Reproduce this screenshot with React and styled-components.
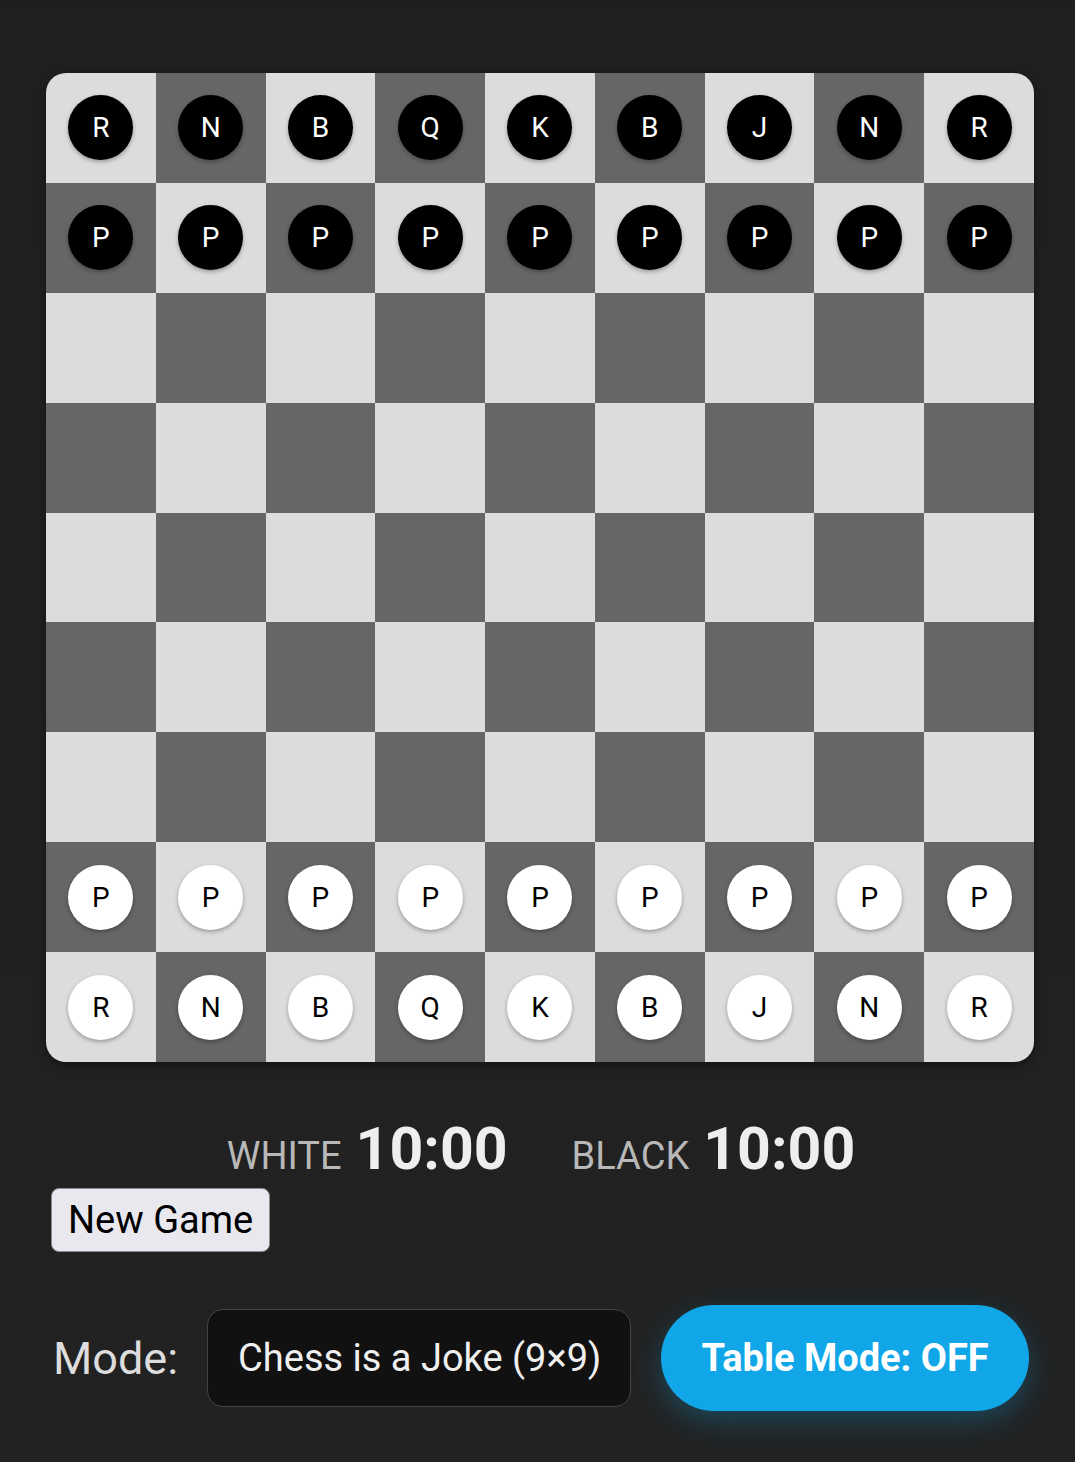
import React from 'react';
import styled, { createGlobalStyle } from 'styled-components';

const GlobalStyle = createGlobalStyle`
  html, body {
    margin: 0;
    padding: 0;
    background: #1f1f1f;
    font-family: Roboto, "Liberation Sans", Arial, sans-serif;
  }
`;

const BACK_ROW = ['R', 'N', 'B', 'Q', 'K', 'B', 'J', 'N', 'R'];
const SIZE = 9;

function startPosition() {
  const rows = [];
  for (let r = 0; r < SIZE; r++) {
    const row = [];
    for (let c = 0; c < SIZE; c++) {
      if (r === 0) row.push({ side: 'black', type: BACK_ROW[c] });
      else if (r === 1) row.push({ side: 'black', type: 'P' });
      else if (r === SIZE - 2) row.push({ side: 'white', type: 'P' });
      else if (r === SIZE - 1) row.push({ side: 'white', type: BACK_ROW[c] });
      else row.push(null);
    }
    rows.push(row);
  }
  return rows;
}

function App() {
  const board = startPosition();

  return (
    <>
      <GlobalStyle />
      <Page>
        <Board>
          {board.map((row, r) =>
            row.map((piece, c) => (
              <Square key={`${r}-${c}`} $dark={(r + c) % 2 === 1}>
                {piece && <Piece $side={piece.side}>{piece.type}</Piece>}
              </Square>
            ))
          )}
        </Board>

        <Clocks>
          <Clock>
            <ClockLabel>White</ClockLabel>
            <ClockTime>10:00</ClockTime>
          </Clock>
          <Clock>
            <ClockLabel>Black</ClockLabel>
            <ClockTime>10:00</ClockTime>
          </Clock>
        </Clocks>

        <NewGameButton>New Game</NewGameButton>

        <ModeRow>
          <ModeLabel>Mode:</ModeLabel>
          <ModeSelect>Chess is a Joke (9×9)</ModeSelect>
          <TableToggle>Table Mode: OFF</TableToggle>
        </ModeRow>
      </Page>
    </>
  );
}

const Page = styled.div`
  min-height: 1462px;
  box-sizing: border-box;
  padding: 73px 41px 0 46px;
  background: linear-gradient(#1f1f1f, #222222);
`;

const Board = styled.div`
  width: 988px;
  height: 989px;
  display: grid;
  grid-template-columns: repeat(9, 1fr);
  grid-template-rows: repeat(9, 1fr);
  border-radius: 20px;
  overflow: hidden;
  box-shadow: 0 3px 8px rgba(0, 0, 0, 0.45);
`;

const Square = styled.div`
  display: flex;
  align-items: center;
  justify-content: center;
  background: ${(p) => (p.$dark ? '#666666' : '#dcdcdc')};
`;

const Piece = styled.div`
  width: 65px;
  height: 65px;
  border-radius: 50%;
  display: flex;
  align-items: center;
  justify-content: center;
  font-size: 28px;
  font-weight: 400;
  background: ${(p) => (p.$side === 'black' ? '#000000' : '#ffffff')};
  color: ${(p) => (p.$side === 'black' ? '#ffffff' : '#000000')};
  box-shadow: 0 2px 4px rgba(0, 0, 0, 0.3);
`;

const Clocks = styled.div`
  display: flex;
  justify-content: center;
  gap: 64px;
  margin-top: 52px;
  padding-left: 2px;
`;

const Clock = styled.div`
  display: flex;
  align-items: baseline;
  gap: 14px;
`;

const ClockLabel = styled.span`
  font-size: 38px;
  text-transform: uppercase;
  color: #b8b8b8;
`;

const ClockTime = styled.span`
  font-size: 59px;
  font-weight: 700;
  color: #eeeeee;
  line-height: 70px;
`;

const NewGameButton = styled.button`
  display: block;
  margin: 4px 0 0 5px;
  height: 64px;
  padding: 0 16px;
  font-family: Roboto, "Liberation Sans", Arial, sans-serif;
  font-size: 38px;
  color: #000000;
  background: #e9e8ee;
  border: 1.5px solid #8a8a8a;
  border-radius: 8px;
`;

const ModeRow = styled.div`
  display: flex;
  align-items: center;
  margin-top: 53px;
  padding-left: 7px;
`;

const ModeLabel = styled.span`
  font-size: 45px;
  color: #dddddd;
  margin-right: 29px;
`;

const ModeSelect = styled.div`
  box-sizing: border-box;
  width: 424px;
  height: 98px;
  display: flex;
  align-items: center;
  padding-left: 30px;
  font-size: 38px;
  color: #f0f0f0;
  background: #111111;
  border: 1.5px solid #444444;
  border-radius: 16px;
`;

const TableToggle = styled.button`
  box-sizing: border-box;
  width: 368px;
  height: 106px;
  margin-left: 30px;
  font-family: Roboto, "Liberation Sans", Arial, sans-serif;
  font-size: 38px;
  font-weight: 700;
  color: #ffffff;
  background: #10a6e8;
  border: none;
  border-radius: 53px;
  box-shadow: 0 10px 30px rgba(16, 166, 232, 0.28);
`;

export default App;
